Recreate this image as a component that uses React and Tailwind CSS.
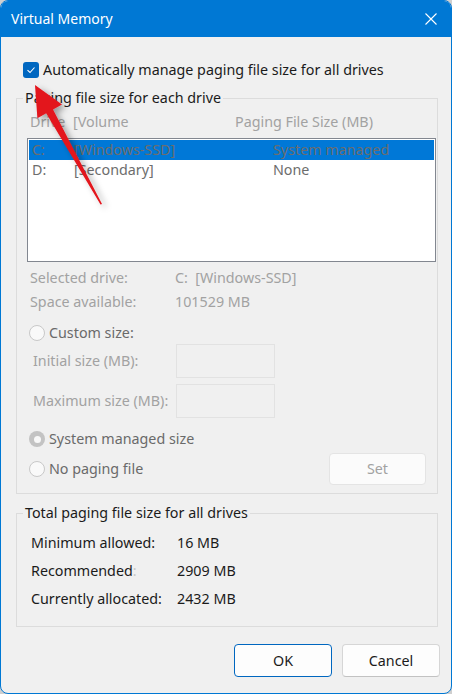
import React from 'react';

const font = { fontFamily: '"Segoe UI", "Noto Sans", Arial, sans-serif' };

function Radio({ checked }) {
  if (checked) {
    return (
      <span className="flex h-[16px] w-[16px] shrink-0 items-center justify-center rounded-full bg-[#c3c3c3]">
        <span className="h-[7px] w-[7px] rounded-full bg-[#f8f8f8]" />
      </span>
    );
  }
  return <span className="h-[16px] w-[16px] shrink-0 rounded-full border border-[#c8c8c8] bg-[#f9f9f9]" />;
}

function Arrow() {
  return (
    <svg className="pointer-events-none absolute left-0 top-0" width="452" height="694" viewBox="0 0 452 694">
      <defs>
        <filter id="sh" x="-50%" y="-50%" width="200%" height="200%">
          <feDropShadow dx="4" dy="3" stdDeviation="3" floodColor="#000" floodOpacity="0.35" />
        </filter>
      </defs>
      <polygon
        points="34,84 61,103.5 52,108.4 101,203 99.5,203.5 45.2,112.2 36.4,117.2"
        fill="#e3141b"
        filter="url(#sh)"
      />
    </svg>
  );
}

export default function App() {
  const dis = 'text-[#a2a2a2]';
  return (
    <div className="h-[694px] w-[452px] bg-[#cfcfcf]" style={font}>
      <div className="relative flex h-[694px] w-[452px] flex-col overflow-hidden rounded-[8px] border border-[#0078d4] bg-[#f0f0f0] text-[14.3px] text-[#1b1b1b]">
        {/* title bar */}
        <div className="flex h-[36px] shrink-0 items-center justify-between bg-[#0078d4] pl-[10px] pr-[14px] text-[14px] text-white">
          <span className="pb-[1px]">Virtual Memory</span>
          <svg width="12" height="12" viewBox="0 0 12 12" className="mb-[1px]">
            <path d="M0.5 0.5 L11.5 11.5 M11.5 0.5 L0.5 11.5" stroke="#fff" strokeWidth="1.1" />
          </svg>
        </div>

        <div className="flex flex-col pl-[15px] pr-[13px]">
          {/* auto checkbox */}
          <div className="mt-[23px] flex h-[20px] items-center gap-[4px] pl-[7px]">
            <span className="flex h-[16px] w-[16px] items-center justify-center rounded-[3px] bg-[#0067c0]">
              <svg width="10" height="10" viewBox="0 0 10 10">
                <path d="M1.5 5.2 L4 7.5 L8.5 2.5" fill="none" stroke="#fff" strokeWidth="1.1" />
              </svg>
            </span>
            <span>Automatically manage paging file size for all drives</span>
          </div>

          {/* group 1 */}
          <fieldset className="mt-[8px] h-[406px] border border-[#dcdcdc]">
            <legend className="ml-[6px] px-[2px] leading-[20px]">Paging file size for each drive</legend>
            <div className="flex flex-col pl-[10px] pr-[1px]">
              <div className={`mt-[4px] flex h-[20px] items-center pl-[3px] ${dis}`}>
                <span className="w-[43px]">Drive</span>
                <span className="w-[162px]">[Volume</span>
                <span>Paging File Size (MB)</span>
              </div>
              <div className="mt-[6px] h-[124px] border border-[#828790] bg-white p-[1px] text-[#6d6d6d]">
                <div className="flex h-[20px] items-center bg-[#0078d7] pl-[3px]">
                  <span className="w-[42px]">C:</span>
                  <span className="w-[199px]">[Windows-SSD]</span>
                  <span>System managed</span>
                </div>
                <div className="flex h-[20px] items-center pl-[3px]">
                  <span className="w-[42px]">D:</span>
                  <span className="w-[199px]">[Secondary]</span>
                  <span>None</span>
                </div>
              </div>

              <div className={`mt-[6px] flex h-[20px] items-center pl-[3px] ${dis}`}>
                <span className="w-[145px]">Selected drive:</span>
                <span>C:&nbsp; [Windows-SSD]</span>
              </div>
              <div className={`mt-[4px] flex h-[20px] items-center pl-[3px] ${dis}`}>
                <span className="w-[145px]">Space available:</span>
                <span>101529 MB</span>
              </div>

              <div className="mt-[11px] flex h-[20px] items-center gap-[4px] pl-[2px] text-[#6a6a6a]">
                <Radio />
                <span>Custom size:</span>
              </div>
              <div className={`mt-[1px] flex h-[34px] items-center pl-[6px] ${dis}`}>
                <span className="w-[143px]">Initial size (MB):</span>
                <span className="h-[34px] w-[99px] border border-[#e2e2e2]" />
              </div>
              <div className={`mt-[6px] flex h-[34px] items-center pl-[6px] ${dis}`}>
                <span className="w-[143px]">Maximum size (MB):</span>
                <span className="h-[34px] w-[99px] border border-[#e2e2e2]" />
              </div>

              <div className="mt-[11px] flex h-[20px] items-center gap-[4px] pl-[2px] text-[#6a6a6a]">
                <Radio checked />
                <span>System managed size</span>
              </div>
              <div className="mt-[4px] flex h-[32px] items-center justify-between pl-[2px] pr-[10px] text-[#6a6a6a]">
                <div className="flex items-center gap-[4px]">
                  <Radio />
                  <span>No paging file</span>
                </div>
                <button className={`h-[32px] w-[97px] rounded-[4px] border border-[#e4e4e4] bg-[#fbfbfb] ${dis}`}>
                  Set
                </button>
              </div>
            </div>
          </fieldset>

          {/* group 2 */}
          <fieldset className="mt-[9px] h-[124px] border border-[#dcdcdc]">
            <legend className="ml-[6px] px-[2px] leading-[20px]">Total paging file size for all drives</legend>
            <div className="mt-[10px] flex flex-col gap-[8px] pl-[14px]">
              <div className="flex h-[20px] items-center">
                <span className="w-[146px]">Minimum allowed:</span>
                <span>16 MB</span>
              </div>
              <div className="flex h-[20px] items-center">
                <span className="w-[146px]">
                  Recommended<span className="text-[#c8c8c8]">:</span>
                </span>
                <span>2909 MB</span>
              </div>
              <div className="flex h-[20px] items-center">
                <span className="w-[146px]">Currently allocated:</span>
                <span>2432 MB</span>
              </div>
            </div>
          </fieldset>
        </div>

        {/* buttons */}
        <div className="mt-[17px] flex justify-end gap-[10px] pr-[11px]">
          <button className="h-[33px] w-[98px] rounded-[4px] border border-[#0067c0] bg-[#fdfdfd] text-[#1b1b1b]">OK</button>
          <button className="h-[33px] w-[98px] rounded-[4px] border border-[#d6d6d6] border-b-[#c2c2c2] bg-[#fdfdfd] text-[#1b1b1b]">
            Cancel
          </button>
        </div>

        <Arrow />
      </div>
    </div>
  );
}
